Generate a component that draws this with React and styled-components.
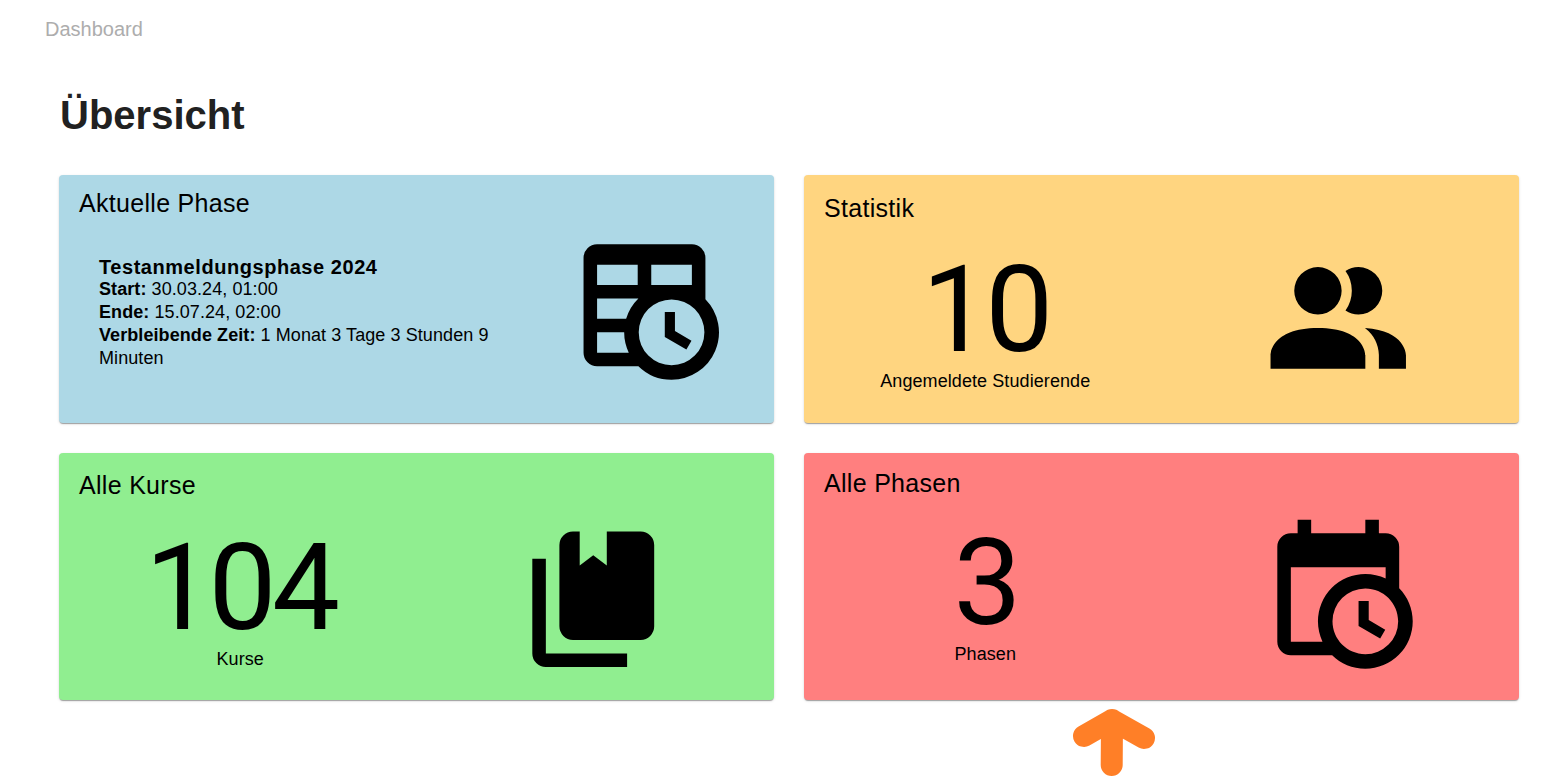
import React from "react";
import styled, { createGlobalStyle } from "styled-components";

const GlobalStyle = createGlobalStyle`
  body {
    margin: 0;
    background: #fff;
    font-family: "Liberation Sans", Arial, sans-serif;
    color: #000;
    overflow: hidden;
  }
`;

const Page = styled.div`
  height: 777px;
  box-sizing: border-box;
  padding: 18px 44px 0 45px;
  overflow: hidden;
`;

const Breadcrumb = styled.nav`
  font-size: 20px;
  line-height: 23px;
  color: #adadad;
`;

const Heading = styled.h1`
  margin: 51px 0 0 15px;
  font-size: 40px;
  line-height: 46px;
  font-weight: 700;
  color: #212121;
`;

const Grid = styled.main`
  display: grid;
  grid-template-columns: 1fr 1fr;
  grid-template-rows: 248px 247px;
  gap: 30px;
  margin: 37px 0 0 14px;
`;

const Card = styled.section`
  box-sizing: border-box;
  padding: ${(p) => p.$top}px 5px 0;
  border-radius: 4px;
  background: ${(p) => p.$color};
  box-shadow:
    0 2px 1px -1px rgba(0, 0, 0, 0.2),
    0 1px 1px 0 rgba(0, 0, 0, 0.14),
    0 1px 3px 0 rgba(0, 0, 0, 0.12);
`;

const CardTitle = styled.h2`
  margin: 0 0 0 15px;
  font-size: 25px;
  line-height: 32px;
  font-weight: 400;
  letter-spacing: 0.3px;
`;

const CardBody = styled.div`
  display: grid;
  grid-template-columns: ${(p) => p.$columns || "1fr 1fr"};
`;

const IconCell = styled.div`
  display: flex;
  justify-content: center;
  padding-top: ${(p) => p.$top}px;

  svg {
    display: block;
    width: 162.5px;
    height: 162.5px;
  }
`;

const Details = styled.div`
  padding: 37px 20px 0 35px;
  font-size: 18px;
  line-height: 23px;
  letter-spacing: 0.08px;
`;

const PhaseName = styled.div`
  font-size: 20px;
  line-height: 22px;
  font-weight: 700;
  letter-spacing: 0.55px;
`;

const Stat = styled.div`
  display: flex;
  flex-direction: column;
  align-items: center;
  padding-top: ${(p) => p.$top}px;
`;

const StatNumber = styled.div`
  font-family: Roboto, "Liberation Sans", sans-serif;
  font-size: 121px;
  line-height: 120px;
  letter-spacing: -4.5px;
`;

const StatLabel = styled.div`
  font-size: 18px;
  line-height: 23px;
  letter-spacing: 0.08px;
`;

const Arrow = styled.svg`
  display: block;
  margin: 8px 0 0 1027px;
`;

const icons = {
  tableClock:
    "M4,3H18A2,2 0 0,1 20,5V11.1A7,7 0 0,1 15,23A7,7 0 0,1 10.1,21H4A2,2 0 0,1 2,19V5A2,2 0 0,1 4,3ZM4,6V9H10V6ZM12,6V9H18V6ZM4,11V14H8.29A7,7 0 0,1 10.1,11ZM4,16V19H8.68A7,7 0 0,1 8,16ZM15,11.15A4.85,4.85 0 1,0 15,20.85A4.85,4.85 0 1,0 15,11.15ZM14,13H15.5V15.82L17.94,17.23L17.19,18.53L14,16.69Z",
  people:
    "M16 17V19H2V17S2 13 9 13 16 17 16 17M12.5 7.5A3.5 3.5 0 1 0 9 11A3.5 3.5 0 0 0 12.5 7.5M15.94 13A5.32 5.32 0 0 1 18 17V19H22V17S22 13.37 15.94 13M15 4A3.39 3.39 0 0 0 13.07 4.59A5 5 0 0 1 13.07 10.41A3.39 3.39 0 0 0 15 11A3.5 3.5 0 0 0 15 4Z",
  books:
    "M19 18H9A2 2 0 0 1 7 16V4A2 2 0 0 1 9 2H10V7L12 5.5L14 7V2H19A2 2 0 0 1 21 4V16A2 2 0 0 1 19 18M17 20V22H5A2 2 0 0 1 3 20V6H5V20Z",
  calendarClock:
    "M15,13H16.5V15.82L18.94,17.23L18.19,18.53L15,16.69V13M19,8H5V19H9.67C9.24,18.09 9,17.07 9,16A7,7 0 0,1 16,9C17.07,9 18.09,9.24 19,9.67V8M5,21C3.89,21 3,20.1 3,19V5C3,3.89 3.89,3 5,3H6V1H8V3H16V1H18V3H19A2,2 0 0,1 21,5V11.1C22.24,12.36 23,14.09 23,16A7,7 0 0,1 16,23C14.09,23 12.36,22.24 11.1,21H5M16,11.15A4.85,4.85 0 0,0 11.15,16C11.15,18.68 13.32,20.85 16,20.85A4.85,4.85 0 0,0 20.85,16C20.85,13.32 18.68,11.15 16,11.15Z",
};

function Icon({ name, top }) {
  return (
    <IconCell $top={top}>
      <svg viewBox="0 0 24 24" aria-hidden="true">
        <path d={icons[name]} fillRule={name === "tableClock" ? "evenodd" : "nonzero"} />
      </svg>
    </IconCell>
  );
}

function StatCard({ title, color, top, value, label, statTop, icon, iconTop }) {
  return (
    <Card $color={color} $top={top}>
      <CardTitle>{title}</CardTitle>
      <CardBody>
        <Stat $top={statTop}>
          <StatNumber>{value}</StatNumber>
          <StatLabel>{label}</StatLabel>
        </Stat>
        <Icon name={icon} top={iconTop} />
      </CardBody>
    </Card>
  );
}

export default function App() {
  return (
    <>
      <GlobalStyle />
      <Page>
        <Breadcrumb>Dashboard</Breadcrumb>
        <Heading>Übersicht</Heading>
        <Grid>
          <Card $color="#add8e6" $top={12}>
            <CardTitle>Aktuelle Phase</CardTitle>
            <CardBody $columns="2fr 1fr">
              <Details>
                <PhaseName>Testanmeldungsphase 2024</PhaseName>
                <div><b>Start:</b> 30.03.24, 01:00</div>
                <div><b>Ende:</b> 15.07.24, 02:00</div>
                <div><b>Verbleibende Zeit:</b> 1 Monat 3 Tage 3 Stunden 9 Minuten</div>
              </Details>
              <Icon name="tableClock" top={5} />
            </CardBody>
          </Card>
          <StatCard title="Statistik" color="#ffd580" top={17} value="10"
            label="Angemeldete Studierende" statTop={26} icon="people" iconTop={16} />
          <StatCard title="Alle Kurse" color="#90ee90" top={16} value="104"
            label="Kurse" statTop={27} icon="books" iconTop={16.7} />
          <StatCard title="Alle Phasen" color="#ff7f7f" top={14} value="3"
            label="Phasen" statTop={24} icon="calendarClock" iconTop={13.7} />
        </Grid>
        <Arrow width="84" height="70" viewBox="0 0 84 70" fill="none" stroke="#ff7f27"
          strokeWidth="22" strokeLinecap="round" strokeLinejoin="round">
          <path d="M12 28L40 12L72 30M40 12L39.7 57" />
        </Arrow>
      </Page>
    </>
  );
}
